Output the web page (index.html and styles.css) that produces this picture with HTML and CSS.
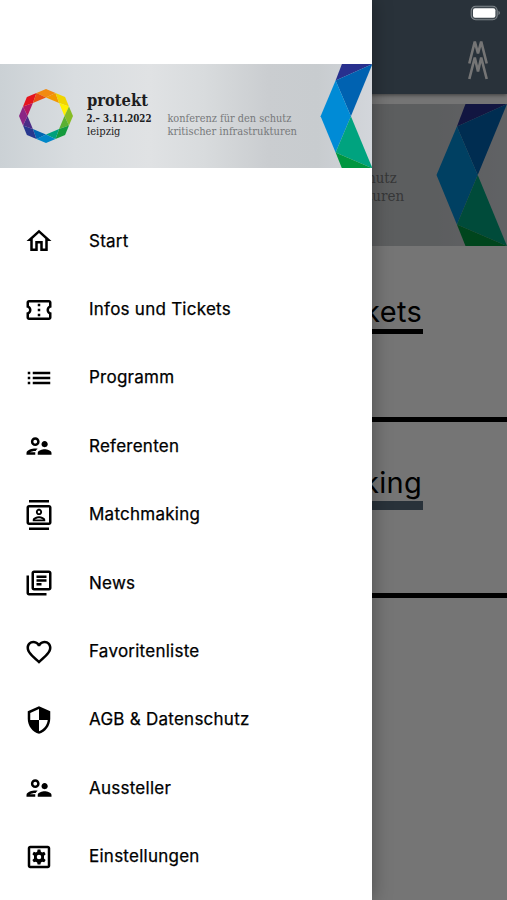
FILE: index.html
```
<!DOCTYPE html>
<html lang="de">
<head>
    <meta charset="UTF-8">
    <meta name="viewport" content="width=device-width, initial-scale=1.0">
    <title>protekt 2022</title>
    <link rel="stylesheet" href="styles.css">
</head>
<body>

<!-- Banner, used in the page and in the menu -->
<svg class="defs" width="0" height="0">
    <defs>
        <linearGradient id="metal">
            <stop offset="0" stop-color="#cbd1d5"/>
            <stop offset="0.2" stop-color="#d9dde0"/>
            <stop offset="0.4" stop-color="#e0e2e4"/>
            <stop offset="0.55" stop-color="#d8dbdd"/>
            <stop offset="0.72" stop-color="#cacdd0"/>
            <stop offset="0.85" stop-color="#c8cccf"/>
            <stop offset="1" stop-color="#d3d6db"/>
        </linearGradient>
        <symbol id="banner" viewBox="0 0 372.5 104.3">
            <rect width="373" height="105" fill="url(#metal)"/>
            <path fill="#f28a10" d="M36.5 29L46 25 55.5 29 46 33.500z"/>
            <path fill="#f39800" d="M46 33.500L55.500 29 59.100 38.900z"/>
            <path fill="#f0d400" d="M55.500 29L65.100 32.900 69 42.500 59.100 38.900z"/>
            <path fill="#fff000" d="M59.100 38.900L69 42.500 64.500 52z"/>
            <path fill="#86bc25" d="M69 42.500L73 52 69 61.500 64.500 52z"/>
            <path fill="#5bb031" d="M64.500 52L69 61.500 59.100 65.100z"/>
            <path fill="#149a3c" d="M69 61.500L65.100 71.100 55.500 75 59.100 65.100z"/>
            <path fill="#00a07c" d="M59.100 65.100L55.500 75 46 70.500z"/>
            <path fill="#0087c8" d="M55.500 75L46 79 36.500 75 46 70.500z"/>
            <path fill="#0067b2" d="M46 70.500L36.500 75 32.900 65.100z"/>
            <path fill="#28388f" d="M36.500 75L26.900 71.100 23 61.500 32.900 65.100z"/>
            <path fill="#4b2d87" d="M32.900 65.100L23 61.500 27.500 52z"/>
            <path fill="#8a2585" d="M23 61.500L19 52 23 42.500 27.500 52z"/>
            <path fill="#b31860" d="M27.500 52L23 42.500 32.900 38.900z"/>
            <path fill="#e5141d" d="M23 42.500L26.900 32.900 36.500 29 32.900 38.900z"/>
            <path fill="#ea5010" d="M32.900 38.900L36.500 29 46 33.500z"/>
            <g class="banner-text">
                <text class="banner-name" x="87" y="42" textLength="61" lengthAdjust="spacingAndGlyphs">protekt</text>
                <text class="banner-date" x="86.5" y="58.4" textLength="65" lengthAdjust="spacingAndGlyphs">2.– 3.11.2022</text>
                <text class="banner-city" x="87" y="71" textLength="33.5" lengthAdjust="spacingAndGlyphs">leipzig</text>
                <text class="banner-claim" x="167.5" y="58.2" textLength="124" lengthAdjust="spacingAndGlyphs">konferenz für den schutz</text>
                <text class="banner-claim" x="167.5" y="71" textLength="129.5" lengthAdjust="spacingAndGlyphs">kritischer infrastrukturen</text>
            </g>
            <path fill="#28308e" d="M342 0H372.5L335.7 16.5z"/>
            <path fill="#0062b1" d="M372.5 0L351 52.2 335.7 16.5z"/>
            <path fill="#008bd6" d="M335.7 16.5L351 52.2 335.7 88.5 320.7 52.2z"/>
            <path fill="#00a37f" d="M351 52.2L372.5 104.3 335.7 88.5z"/>
            <path fill="#009640" d="M335.7 88.5L372.5 104.3H342z"/>
        </symbol>
        <symbol id="people" viewBox="0 0 24 24">
            <path d="M9 12c1.93 0 3.5-1.57 3.5-3.5S10.93 5 9 5 5.500 6.570 5.500 8.500 7.070 12 9 12zm0-5c.83 0 1.500.67 1.500 1.500S9.830 10 9 10s-1.500-.67-1.500-1.500S8.170 7 9 7zm.05 10H4.770c.99-.5 2.700-1 4.230-1 .11 0 .23.01.34.01.34-.73.93-1.330 1.640-1.810-.73-.13-1.420-.2-1.980-.2-2.340 0-7 1.170-7 3.500V19h7v-1.500c0-.17.02-.34.05-.5zm7.450-2.500c-1.840 0-5.500 1.010-5.500 3V19h11v-1.500c0-1.990-3.660-3-5.500-3zm1.210-1.820c.76-.43 1.290-1.240 1.290-2.180C19 9.120 17.880 8 16.500 8S14 9.120 14 10.500c0 .94.53 1.750 1.290 2.180.36.2.77.32 1.210.32s.85-.12 1.210-.32z"/>
        </symbol>
    </defs>
</svg>

<div class="page">
    <header class="topbar">
        <svg class="mm-logo" viewBox="0 0 20 40">
            <path d="M1.300 23.500L6.800 1.500 10 13.500 13.200 1.500 18.700 23.500M1.300 39L6.800 17.500 10 31.500 13.200 17.500 18.700 39"/>
        </svg>
    </header>
    <svg class="page-banner"><use href="#banner"/></svg>
    <section class="tile">
        <h2 class="tile-title">Tickets</h2>
    </section>
    <section class="tile tile-match">
        <h2 class="tile-title">Matchmaking</h2>
    </section>
</div>

<div class="backdrop"></div>

<svg class="battery" viewBox="0 0 31 16">
    <rect x="1.200" y="1.200" width="26" height="13.600" rx="4.500" fill="#3d464d" stroke="#80878c" stroke-width="1.100"/>
    <rect x="3" y="3.300" width="22.400" height="9.400" rx="2" fill="#fff"/>
    <path d="M28.500 5.800q2.800 2.200 0 4.400z" fill="#80878c"/>
</svg>

<aside class="drawer">
    <svg class="drawer-banner"><use href="#banner"/></svg>
    <nav class="menu">
        <a class="menu-item">
            <svg class="icon" viewBox="0 0 24 24"><path d="M12 5.690l5 4.500V18h-2v-6H9v6H7v-7.810l5-4.500M12 3L2 12h3v8h6v-6h2v6h6v-8h3L12 3z"/></svg>
            <span>Start</span>
        </a>
        <a class="menu-item">
            <svg class="icon" viewBox="0 0 24 24"><path d="M22 10V6c0-1.110-.9-2-2-2H4c-1.100 0-1.990.89-1.990 2v4c1.100 0 1.990.9 1.990 2s-.89 2-2 2v4c0 1.100.9 2 2 2h16c1.100 0 2-.9 2-2v-4c-1.100 0-2-.9-2-2s.9-2 2-2zm-2-1.460c-1.190.69-2 1.990-2 3.460s.81 2.770 2 3.460V18H4v-2.540c1.190-.69 2-1.990 2-3.460 0-1.480-.8-2.770-1.990-3.460L4 6h16v2.540zM11 15h2v2h-2zm0-4h2v2h-2zm0-4h2v2h-2z"/></svg>
            <span>Infos und Tickets</span>
        </a>
        <a class="menu-item">
            <svg class="icon" viewBox="0 0 24 24"><path d="M3 13h2v-2H3v2zm0 4h2v-2H3v2zm0-8h2V7H3v2zm4 4h14v-2H7v2zm0 4h14v-2H7v2zM7 7v2h14V7H7z"/></svg>
            <span>Programm</span>
        </a>
        <a class="menu-item">
            <svg class="icon"><use href="#people"/></svg>
            <span>Referenten</span>
        </a>
        <a class="menu-item">
            <svg class="icon" viewBox="0 0 24 24"><path d="M20 4H4c-1.100 0-2 .9-2 2v12c0 1.100.9 2 2 2h16c1.100 0 2-.9 2-2V6c0-1.100-.9-2-2-2zm0 14H4V6h16v12zM4 0h16v2H4zm0 22h16v2H4zm8-10c1.380 0 2.500-1.120 2.500-2.500S13.380 7 12 7 9.500 8.120 9.500 9.500 10.620 12 12 12zm0-3.500c.55 0 1 .45 1 1s-.45 1-1 1-1-.45-1-1 .45-1 1-1zm5 7.490C17 13.900 13.690 13 12 13s-5 .9-5 2.990V17h10v-1.010zm-8.190-.49c.61-.52 2.030-1 3.190-1 1.170 0 2.590.48 3.200 1H8.810z"/></svg>
            <span>Matchmaking</span>
        </a>
        <a class="menu-item">
            <svg class="icon" viewBox="0 0 24 24"><path d="M4 6H2v14c0 1.100.9 2 2 2h14v-2H4V6zm16-4H8c-1.100 0-2 .9-2 2v12c0 1.100.9 2 2 2h12c1.100 0 2-.9 2-2V4c0-1.100-.9-2-2-2zm0 14H8V4h12v12zM10 9h8v2h-8zm0 3h4v2h-4zm0-6h8v2h-8z"/></svg>
            <span>News</span>
        </a>
        <a class="menu-item">
            <svg class="icon" viewBox="0 0 24 24"><path d="M16.500 3c-1.740 0-3.410.81-4.500 2.090C10.910 3.810 9.240 3 7.500 3 4.420 3 2 5.420 2 8.500c0 3.780 3.400 6.860 8.550 11.540L12 21.350l1.450-1.320C18.600 15.360 22 12.280 22 8.500 22 5.420 19.580 3 16.500 3zm-4.400 15.550l-.1.1-.1-.1C7.140 14.240 4 11.390 4 8.500 4 6.500 5.500 5 7.500 5c1.540 0 3.040.99 3.570 2.360h1.870C13.460 5.990 14.960 5 16.500 5c2 0 3.500 1.500 3.500 3.500 0 2.890-3.140 5.740-7.900 10.050z"/></svg>
            <span>Favoritenliste</span>
        </a>
        <a class="menu-item">
            <svg class="icon" viewBox="0 0 24 24"><path d="M12 1L3 5v6c0 5.550 3.840 10.740 9 12 5.160-1.260 9-6.450 9-12V5l-9-4zm0 10.990h7c-.53 4.120-3.280 7.790-7 8.940V12H5V6.300l7-3.110v8.800z"/></svg>
            <span>AGB &amp; Datenschutz</span>
        </a>
        <a class="menu-item">
            <svg class="icon"><use href="#people"/></svg>
            <span>Aussteller</span>
        </a>
        <a class="menu-item">
            <svg class="icon" viewBox="0 0 24 24">
                <path d="M19 3H5c-1.110 0-2 .9-2 2v14c0 1.100.89 2 2 2h14c1.110 0 2-.9 2-2V5c0-1.100-.89-2-2-2zm0 16H5V5h14v14z"/>
                <path fill-rule="evenodd" d="M10.900 6h2.200l.4 1.700 1 .6 1.700-.5 1.100 1.900-1.300 1.200v2.200l1.300 1.200-1.100 1.900-1.700-.5-1 .6-.4 1.700h-2.200l-.4-1.700-1-.6-1.700.5-1.100-1.900L8 13.100v-2.200L6.700 9.700l1.100-1.900 1.700.5 1-.6zM12 10.200a1.800 1.800 0 1 0 0 3.600 1.800 1.800 0 0 0 0-3.600z"/>
            </svg>
            <span>Einstellungen</span>
        </a>
    </nav>
</aside>

</body>
</html>
```
FILE: styles.css
```
* {
    box-sizing: border-box;
}
body {
    margin: 0;
    height: 900px;
    overflow: hidden;
    position: relative;
    background: #fff;
    font-family: Inter, sans-serif;
    color: #000;
}
.defs {
    position: absolute;
}

/* Page behind the menu */
.page {
    height: 900px;
}
.topbar {
    height: 94px;
    padding: 40px 19px 0 0;
    display: flex;
    justify-content: flex-end;
    background: #596d7e;
    box-shadow: 0 1px 4px rgba(0, 0, 0, 0.5);
}
.mm-logo {
    width: 20px;
    height: 40px;
    fill: none;
    stroke: #fff;
    stroke-width: 2.6;
    stroke-linejoin: bevel;
}
.page-banner {
    display: block;
    width: 507px;
    height: 142px;
    margin-top: 10px;
}
.tile {
    height: 176px;
    padding: 48px 84px 0 85px;
    border-bottom: 5px solid #000;
}
.tile-title {
    margin: 0;
    height: 40px;
    padding-right: 1px;
    border-bottom: 5px solid #000;
    font-size: 29px;
    font-weight: 400;
    line-height: 36px;
    letter-spacing: 0.3px;
    text-align: right;
}
.tile-match {
    padding-top: 43px;
}
.tile-match .tile-title {
    height: 45px;
    border-bottom: 9px solid #596d7e;
}
.backdrop {
    position: absolute;
    inset: 0;
    background: rgba(0, 0, 0, 0.54);
}
/* status bar stays above the backdrop */
.battery {
    position: absolute;
    top: 5px;
    right: 6px;
    width: 31px;
    height: 16px;
}

/* Menu */
.drawer {
    position: absolute;
    top: 0;
    left: 0;
    width: 372.4px;
    height: 900px;
    padding-top: 63.7px;
    background: #fff;
    box-shadow: 0 0 18px rgba(0, 0, 0, 0.35);
}
.drawer-banner {
    display: block;
    width: 372.4px;
    height: 104.3px;
}
.menu {
    padding-top: 39px;
}
.menu-item {
    display: flex;
    align-items: center;
    height: 68.4px;
    padding-left: 24px;
    gap: 35px;
    font-size: 17px;
    font-weight: 400;
    letter-spacing: 0.25px;
    -webkit-text-stroke: 0.25px #000;
}
.menu-item span {
    margin-top: -1px;
}
.icon {
    width: 30px;
    height: 30px;
    flex: none;
}

/* Banner lettering */
.banner-text {
    font-family: "DejaVu Serif", serif;
    fill: #1d1d1f;
}
.banner-name {
    font-size: 17px;
    font-weight: 700;
}
.banner-date {
    font-size: 11.5px;
    font-weight: 700;
}
.banner-city {
    font-size: 11px;
}
.banner-claim {
    font-size: 10.5px;
    fill: #77797b;
}
```
